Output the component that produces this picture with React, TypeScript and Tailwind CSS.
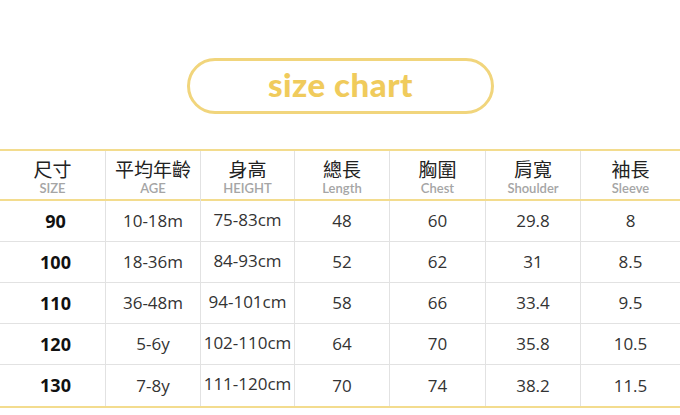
const heads = [
  { zh: '尺寸', en: 'SIZE' },
  { zh: '平均年齡', en: 'AGE' },
  { zh: '身高', en: 'HEIGHT' },
  { zh: '總長', en: 'Length' },
  { zh: '胸圍', en: 'Chest' },
  { zh: '肩寬', en: 'Shoulder' },
  { zh: '袖長', en: 'Sleeve' },
];

const rows = [
  ['90', '10-18m', '75-83cm', '48', '60', '29.8', '8'],
  ['100', '18-36m', '84-93cm', '52', '62', '31', '8.5'],
  ['110', '36-48m', '94-101cm', '58', '66', '33.4', '9.5'],
  ['120', '5-6y', '102-110cm', '64', '70', '35.8', '10.5'],
  ['130', '7-8y', '111-120cm', '70', '74', '38.2', '11.5'],
];

const cols = 'grid grid-cols-[105px_95px_94px_95px_96px_95px_1fr]';

export default function App() {
  return (
    <div className="w-[680px] h-[415px] bg-white overflow-hidden font-['Open_Sans','Noto_Sans_CJK_TC',sans-serif]">
      <div className="flex justify-center pt-[58px] h-[149px]">
        <div className="w-[307px] h-[56px] rounded-full border-[3px] border-[#f1d57c] flex items-center justify-center ml-[1px]">
          <span className="font-['Lato',sans-serif] font-black text-[33px] text-[#f0cb5c] tracking-[0.5px] leading-none -mt-[3px]">
            size chart
          </span>
        </div>
      </div>

      <div className="border-t-2 border-b-2 border-[#f3dc8e]">
        <div className={`${cols} h-[50px] border-b-2 border-[#f3dc8e]`}>
          {heads.map((h, i) => (
            <div
              key={h.en}
              className={`flex flex-col items-center justify-center pt-[3px] ${i > 0 ? 'border-l border-[#e2e2e2]' : ''}`}
            >
              <span className="text-[19px] leading-[22px] text-[#222] font-['Noto_Sans_CJK_TC',sans-serif]">{h.zh}</span>
              <span className="text-[13px] leading-[16px] text-[#a5a5a5] font-['Lato',sans-serif] font-semibold">{h.en}</span>
            </div>
          ))}
        </div>
        {rows.map((r, ri) => (
          <div
            key={r[0]}
            className={`${cols} h-[41px] ${ri < rows.length - 1 ? 'border-b border-[#e2e2e2]' : ''}`}
          >
            {r.map((c, i) => (
              <div
                key={i}
                className={`flex items-center justify-center ${i > 0 ? 'border-l border-[#e2e2e2]' : ''} ${i === 0 ? 'font-bold text-[18px] text-[#111] pl-[6px]' : 'text-[17px] text-[#333]'} ${i === 2 ? '-mt-[3px]' : ''}`}
              >
                {c}
              </div>
            ))}
          </div>
        ))}
      </div>
    </div>
  );
}
